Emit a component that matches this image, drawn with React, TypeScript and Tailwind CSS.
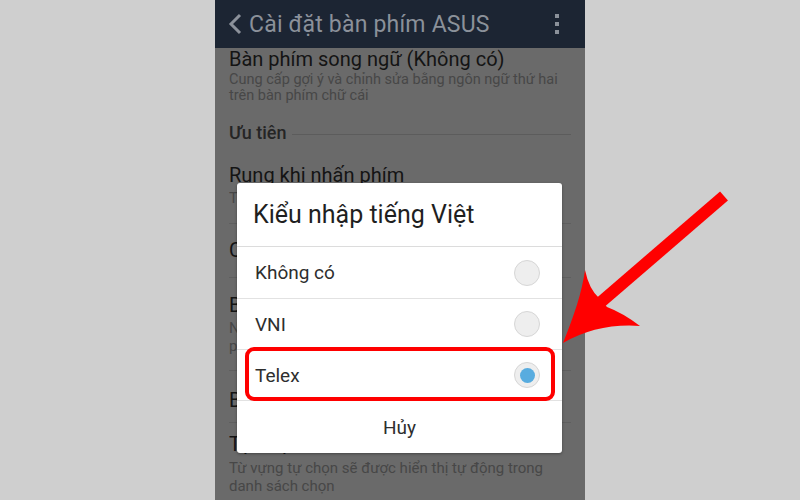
import React from "react";

function Radio({ checked }: { checked?: boolean }) {
  return (
    <div className="w-[26px] h-[26px] rounded-full bg-[#eeeeee] border border-[#d6d6d6] flex items-center justify-center">
      {checked && <div className="w-[15px] h-[15px] rounded-full bg-[#58acdf]" />}
    </div>
  );
}

function Option({ label, checked, tall }: { label: string; checked?: boolean; tall?: boolean }) {
  return (
    <div
      className={
        (tall ? "h-[52px]" : "h-[51px]") +
        " flex items-center justify-between pl-[18px] pr-[22px] border-b border-[#e2e2e2]"
      }
    >
      <span className="text-[19px] leading-none text-[#2e2e2e]">{label}</span>
      <Radio checked={checked} />
    </div>
  );
}

function Divider() {
  return <div className="h-px bg-[#5f5f5f]" />;
}

export default function App() {
  return (
    <div className="relative w-[800px] h-[500px] bg-[#cfcfcf] overflow-hidden flex font-['Roboto','Noto_Sans',sans-serif]">
      <div className="relative ml-[215px] w-[370px] h-full bg-[#6a6a6a] flex flex-col overflow-hidden">
        {/* Action bar */}
        <div className="h-[48px] shrink-0 bg-[#1c2533] flex items-center pl-[13px] pr-[26px] z-10">
          <svg width="15" height="22" viewBox="0 0 15 22" className="mr-[6px]">
            <path d="M12 2 L3 11 L12 20" fill="none" stroke="#8b919a" strokeWidth="3" />
          </svg>
          <span className="text-[23px] leading-none text-[#8b919a] tracking-[0.2px]">Cài đặt bàn phím ASUS</span>
          <div className="ml-auto flex flex-col gap-[4px]">
            <span className="w-[4px] h-[4px] bg-[#8b919a]" />
            <span className="w-[4px] h-[4px] bg-[#8b919a]" />
            <span className="w-[4px] h-[4px] bg-[#8b919a]" />
          </div>
        </div>

        {/* Dimmed settings list */}
        <div className="flex flex-col px-[14px]">
          <div className="text-[20px] leading-[22px] text-[#141414]">Bàn phím song ngữ (Không có)</div>
          <div className="mt-[2px] text-[14.5px] leading-[16px] text-[#474747]">
            Cung cấp gợi ý và chỉnh sửa bằng ngôn ngữ thứ hai
            <br />
            trên bàn phím chữ cái
          </div>

          <div className="mt-[16px] h-[24px] flex items-center gap-[6px]">
            <span className="text-[18px] font-medium text-[#252525]">Ưu tiên</span>
            <div className="flex-1 h-px bg-[#5c5c5c] mt-[4px]" />
          </div>

          <div className="mt-[20px] text-[20px] leading-[22px] text-[#141414]">Rung khi nhấn phím</div>
          <div className="mt-[4px] text-[15px] leading-[16px] text-[#474747]">Tắt</div>
          <div className="mt-[17px]"><Divider /></div>

          <div className="mt-[15px] text-[20px] leading-[22px] text-[#141414]">Cỡ chữ</div>
          <div className="mt-[16px]"><Divider /></div>

          <div className="mt-[16px] text-[20px] leading-[22px] text-[#141414]">Bật viết hoa</div>
          <div className="mt-[3px] text-[15px] leading-[18px] text-[#474747]">
            Nhấn
            <br />
            phía
          </div>
          <div className="mt-[15px]"><Divider /></div>

          <div className="mt-[18px] text-[20px] leading-[22px] text-[#141414]">Bật gợi ý</div>
          <div className="mt-[11px]"><Divider /></div>

          <div className="mt-[10px] text-[20px] leading-[22px] text-[#141414]">Tự chọn</div>
          <div className="mt-[4px] text-[15px] leading-[18px] text-[#474747]">
            Từ vựng tự chọn sẽ được hiển thị tự động trong
            <br />
            danh sách chọn
          </div>
        </div>

        {/* Dialog */}
        <div className="absolute left-[22px] top-[183px] w-[325px] h-[270px] bg-white rounded-[3px] shadow-[0_1px_3px_rgba(0,0,0,0.35)] flex flex-col z-20">
          <div className="h-[64px] shrink-0 flex items-center pl-[16px] border-b border-[#dcdcdc]">
            <span className="text-[25px] leading-none text-[#1f1f1f]">Kiểu nhập tiếng Việt</span>
          </div>
          <Option label="Không có" tall />
          <Option label="VNI" />
          <Option label="Telex" checked />
          <div className="flex-1 flex items-center justify-center">
            <span className="text-[19px] leading-none text-[#2e2e2e]">Hủy</span>
          </div>

          {/* highlight around Telex */}
          <div className="absolute left-[8px] top-[164px] w-[310px] h-[54px] border-[4px] border-[#ff0000] rounded-[9px]" />
        </div>
      </div>

      {/* Red arrow */}
      <svg className="absolute inset-0 z-30 pointer-events-none" width="800" height="500" viewBox="0 0 800 500">
        <line x1="724" y1="196" x2="601" y2="302" stroke="#ff0000" strokeWidth="12" />
        <path
          d="M563,343 C574,316 582,292 585,270 Q589,289 599,298 L607,307 Q623,313 640,326 Q598,323 563,343 Z"
          fill="#ff0000"
        />
      </svg>
    </div>
  );
}
